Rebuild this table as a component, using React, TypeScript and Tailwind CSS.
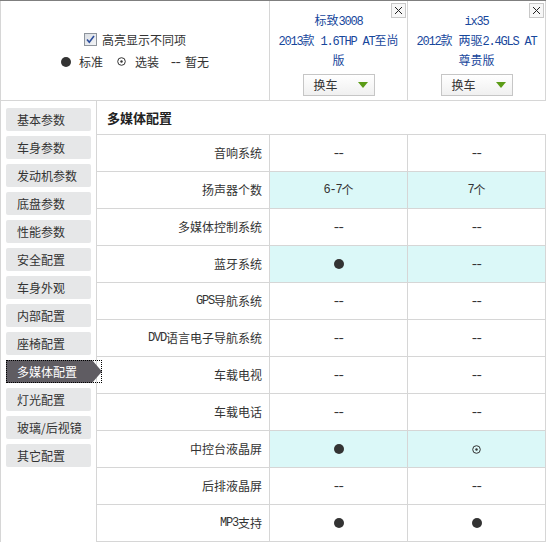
import React from "react";

function M({ t }: { t: string }) {
  const parts = t.split(/([\x20-\x7E]+)/).filter((p) => p !== "");
  return (
    <>
      {parts.map((p, i) =>
        p === "--" ? (
          <span key={i} className="inline-block font-['Liberation_Sans',sans-serif] text-[12px] tracking-[-0.5px] scale-x-[1.35]">
            --
          </span>
        ) : /^[\x20-\x7E]+$/.test(p) ? (
          <span key={i} className="font-['Liberation_Mono',monospace] text-[12px] tracking-[-1.2px] whitespace-pre">
            {p}
          </span>
        ) : (
          <span key={i}>{p}</span>
        )
      )}
    </>
  );
}

function Dot() {
  return <span className="inline-block w-[10px] h-[10px] rounded-full bg-[#333]" />;
}

function Opt() {
  return (
    <svg width="9" height="9" viewBox="0 0 9 9">
      <circle cx="4.5" cy="4.5" r="3.8" fill="none" stroke="#333" strokeWidth="1" />
      <circle cx="4.5" cy="4.5" r="1.2" fill="#333" />
    </svg>
  );
}

function Val({ v }: { v: string }) {
  if (v === "●") return <Dot />;
  if (v === "⊙") return <Opt />;
  return <M t={v} />;
}

function CarHead({ lines }: { lines: string[] }) {
  return (
    <div className="relative w-[138px] border-r border-[#d6d6d6] flex flex-col items-center pt-[9px]">
      <div className="absolute top-[2px] right-[1px] w-[15px] h-[15px] border border-[#c8c8c8] bg-[#f7f7f7] flex items-center justify-center">
        <svg width="9" height="9" viewBox="0 0 9 9">
          <path d="M1 1 L8 8 M8 1 L1 8" stroke="#222" strokeWidth="1" />
        </svg>
      </div>
      {lines.map((l, i) => (
        <div key={i} className="leading-[20px] h-[20px] text-[#17479c] text-center whitespace-nowrap">
          <M t={l} />
        </div>
      ))}
      <div className="mt-[4px] w-[72px] h-[22px] border border-[#c6c6c6] bg-gradient-to-b from-white to-[#f0f0f0] flex items-center pl-[10px]">
        <span className="text-[12px] text-[#333]">换车</span>
        <span className="ml-auto mr-[6px] w-0 h-0 border-l-[5px] border-r-[5px] border-t-[6px] border-l-transparent border-r-transparent border-t-[#5b9c17]" />
      </div>
    </div>
  );
}

const navItems = [
  "基本参数",
  "车身参数",
  "发动机参数",
  "底盘参数",
  "性能参数",
  "安全配置",
  "车身外观",
  "内部配置",
  "座椅配置",
  "多媒体配置",
  "灯光配置",
  "玻璃/后视镜",
  "其它配置",
];

const rows: [string, string, string, boolean][] = [
  ["音响系统", "--", "--", false],
  ["扬声器个数", "6-7个", "7个", true],
  ["多媒体控制系统", "--", "--", false],
  ["蓝牙系统", "●", "--", true],
  ["GPS导航系统", "--", "--", false],
  ["DVD语言电子导航系统", "--", "--", false],
  ["车载电视", "--", "--", false],
  ["车载电话", "--", "--", false],
  ["中控台液晶屏", "●", "⊙", true],
  ["后排液晶屏", "--", "--", false],
  ["MP3支持", "●", "●", false],
];

export default function App() {
  return (
    <div className="w-[546px] h-[542px] overflow-hidden bg-white border-t border-[#7f7f7f] text-[#333] text-[12px] font-['Noto_Sans_CJK_SC',sans-serif]">
      <div className="flex h-[100px] border-b border-[#d6d6d6]">
        <div className="w-[270px] border-x border-[#d6d6d6] flex flex-col items-center justify-center gap-[7px]">
          <div className="flex items-center gap-[5px] h-[15px]">
            <svg width="13" height="13" viewBox="0 0 13 13">
              <defs>
                <linearGradient id="cb" x1="0" y1="0" x2="1" y2="1">
                  <stop offset="0" stopColor="#d9dde3" />
                  <stop offset="1" stopColor="#f4f5f7" />
                </linearGradient>
              </defs>
              <rect x="0.5" y="0.5" width="12" height="12" fill="url(#cb)" stroke="#8e949c" />
              <path d="M3 6.5 L5.3 9.2 L10 3" fill="none" stroke="#2b4c9b" strokeWidth="1.6" />
            </svg>
            <span className="leading-[15px]">高亮显示不同项</span>
          </div>
          <div className="flex items-center h-[15px]">
            <Dot />
            <span className="ml-[8px] leading-[15px]">标准</span>
            <span className="ml-[14px] flex">
              <Opt />
            </span>
            <span className="ml-[9px] leading-[15px]">选装</span>
            <span className="ml-[13px] leading-[15px]">
              <M t="--" />
            </span>
            <span className="ml-[6px] leading-[15px]">暂无</span>
          </div>
        </div>
        <CarHead lines={["标致3008", "2013款 1.6THP AT至尚", "版"]} />
        <CarHead lines={["ix35", "2012款 两驱2.4GLS AT", "尊贵版"]} />
      </div>

      <div className="flex h-[441px]">
        <div className="w-[97px] border-x border-[#d6d6d6] pt-[7px] pl-[5px] flex flex-col gap-[5px]">
          {navItems.map((n, i) =>
            i === 9 ? (
              <div key={n} className="relative z-10 w-[96px] h-[23px] shrink-0">
                <div className="absolute inset-0 bg-[#5f5c62] [clip-path:polygon(0_0,86px_0,96px_50%,86px_100%,0_100%)]" />
                <div className="absolute inset-0 border border-dotted border-black" />
                <div className="relative pl-[11px] leading-[23px] text-white">{n}</div>
              </div>
            ) : (
              <div key={n} className="w-[85px] h-[23px] shrink-0 rounded-[2px] bg-[#e6e7e8] pl-[11px] leading-[23px] whitespace-nowrap">
                {n}
              </div>
            )
          )}
        </div>
        <div className="w-[449px] flex flex-col">
          <div className="h-[34px] shrink-0 border-b border-[#d6d6d6] flex items-center pl-[10px] font-bold text-[13px] text-[#222]">
            多媒体配置
          </div>
          {rows.map(([label, a, b, hl]) => (
            <div key={label} className="h-[37px] shrink-0 border-b border-[#d6d6d6] flex">
              <div className="w-[173px] border-r border-[#d6d6d6] flex items-center justify-end pr-[7px] whitespace-nowrap">
                <M t={label} />
              </div>
              <div className={`w-[138px] border-r border-[#d6d6d6] flex items-center justify-center ${hl ? "bg-[#dbf8f8]" : ""}`}>
                <Val v={a} />
              </div>
              <div className={`w-[138px] border-r border-[#d6d6d6] flex items-center justify-center ${hl ? "bg-[#dbf8f8]" : ""}`}>
                <Val v={b} />
              </div>
            </div>
          ))}
        </div>
      </div>
    </div>
  );
}
